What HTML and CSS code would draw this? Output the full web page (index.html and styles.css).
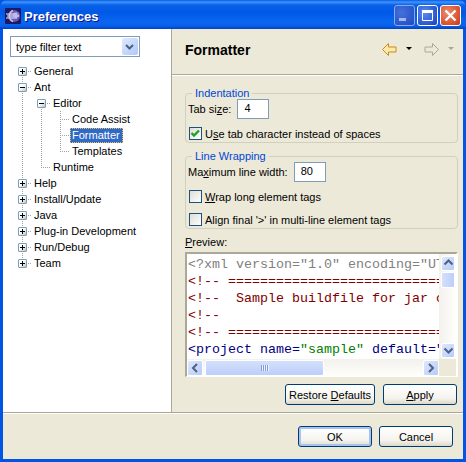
FILE: index.html
```html
<!DOCTYPE html>
<html>
<head>
  <title>Preferences</title>
  <link rel="stylesheet" href="styles.css">
</head>
<body>
  <div class="window">
    <div class="titlebar">
      <svg class="app-icon" width="16" height="16" viewBox="0 0 16 16">
        <rect width="16" height="16" rx="1" fill="#1b1a66"/>
        <circle cx="9" cy="8" r="6" fill="#6a58b4"/>
        <circle cx="11" cy="7" r="3" fill="#9488cc"/>
        <path d="M1 6h11M2 8h12M1 10h11" stroke="#f0eefa" stroke-width="1"/>
        <path d="M8 2.500a6 6 0 0 0 0 11" fill="none" stroke="#c9c3ea" stroke-width="1.500"/>
      </svg>
      <span class="title">Preferences</span>
      <div class="caption-buttons">
        <div class="caption-btn min">
          <svg width="21" height="21" viewBox="0 0 21 21"><rect x="5" y="13" width="7" height="3" fill="#fff" opacity="0.55"/></svg>
        </div>
        <div class="caption-btn">
          <svg width="21" height="21" viewBox="0 0 21 21"><path d="M5.500 6.500h10v9h-10z" fill="none" stroke="#fff" stroke-width="1"/><rect x="5" y="5" width="11" height="3" fill="#fff"/></svg>
        </div>
        <div class="caption-btn close">
          <svg width="21" height="21" viewBox="0 0 21 21"><path d="M5.500 5.500l10 10M15.500 5.500l-10 10" stroke="#fff" stroke-width="2.400"/></svg>
        </div>
      </div>
    </div>

    <div class="content">
      <div class="main">
        <div class="sidebar">
          <div class="filter">
            <span class="filter-text">type filter text</span>
            <span class="filter-drop">
              <svg width="15" height="17" viewBox="0 0 15 17"><path d="M4 7l3.500 3.500L11 7" fill="none" stroke="#4d6185" stroke-width="2"/></svg>
            </span>
          </div>

          <div class="tree">
            <div class="row"><span class="cell line-down"><i class="exp plus"></i></span><span class="label">General</span></div>
            <div class="row"><span class="cell line-both"><i class="exp minus"></i></span><span class="label">Ant</span></div>
            <div class="row"><span class="cell line-full"></span><span class="cell line-down"><i class="exp minus"></i></span><span class="label">Editor</span></div>
            <div class="row"><span class="cell line-full"></span><span class="cell line-full"></span><span class="cell elbow-tee"></span><span class="label">Code Assist</span></div>
            <div class="row"><span class="cell line-full"></span><span class="cell line-full"></span><span class="cell elbow-tee"></span><span class="label selected">Formatter</span></div>
            <div class="row"><span class="cell line-full"></span><span class="cell line-full"></span><span class="cell elbow-end"></span><span class="label">Templates</span></div>
            <div class="row"><span class="cell line-full"></span><span class="cell elbow-end"></span><span class="label">Runtime</span></div>
            <div class="row"><span class="cell line-both"><i class="exp plus"></i></span><span class="label">Help</span></div>
            <div class="row"><span class="cell line-both"><i class="exp plus"></i></span><span class="label">Install/Update</span></div>
            <div class="row"><span class="cell line-both"><i class="exp plus"></i></span><span class="label">Java</span></div>
            <div class="row"><span class="cell line-both"><i class="exp plus"></i></span><span class="label">Plug-in Development</span></div>
            <div class="row"><span class="cell line-both"><i class="exp plus"></i></span><span class="label">Run/Debug</span></div>
            <div class="row"><span class="cell line-up"><i class="exp plus"></i></span><span class="label">Team</span></div>
          </div>
        </div>

        <div class="panel">
          <div class="panel-header">
            <h1 class="panel-title">Formatter</h1>
            <div class="nav">
              <svg width="15" height="13" viewBox="0 0 15 13"><path d="M.5 6.500L6.500 .5v3.500h7.500v5H6.500v3.500z" fill="#fde9a9" stroke="#c98b1c"/></svg>
              <span class="nav-drop"></span>
              <svg width="15" height="13" viewBox="0 0 15 13"><path d="M14.500 6.500L8.500 .5v3.500H1v5h7.500v3.500z" fill="#ece9d8" stroke="#aca899"/></svg>
              <span class="nav-drop off"></span>
            </div>
          </div>

          <div class="panel-body">
            <fieldset class="group">
              <legend>Indentation</legend>
              <div class="field">
                <label>Tab si<u>z</u>e:</label>
                <span class="input size-tab">4</span>
              </div>
              <div class="check-row">
                <span class="check">
                  <svg width="11" height="11" viewBox="0 0 11 11"><path d="M1.500 5l2.500 2.500L9 2.500" fill="none" stroke="#21a121" stroke-width="2.400"/></svg>
                </span>
                <span>U<u>s</u>e tab character instead of spaces</span>
              </div>
            </fieldset>

            <fieldset class="group wrap">
              <legend>Line Wrapping</legend>
              <div class="field">
                <label>Ma<u>x</u>imum line width:</label>
                <span class="input">80</span>
              </div>
              <div class="check-row">
                <span class="check"></span>
                <span><u>W</u>rap long element tags</span>
              </div>
              <div class="check-row tight">
                <span class="check"></span>
                <span>Align final '&gt;' in multi-line element tags</span>
              </div>
            </fieldset>

            <div class="preview-label"><u>P</u>review:</div>

            <div class="preview">
              <div class="preview-top">
                <div class="code">
                  <div class="gray">&lt;?xml version="1.0" encoding="UT</div>
                  <div class="red">&lt;!-- ===========================</div>
                  <div class="red">&lt;!--&nbsp;&nbsp;Sample buildfile for jar c</div>
                  <div class="red">&lt;!--</div>
                  <div class="red">&lt;!-- ===========================</div>
                  <div class="blue">&lt;project name=<span class="green">"sample"</span> default="</div>
                </div>
                <div class="vscroll">
                  <span class="sb-btn">
                    <svg width="15" height="14" viewBox="0 0 15 14"><path d="M3.500 8.500l4-4 4 4" fill="none" stroke="#4d6185" stroke-width="2"/></svg>
                  </span>
                  <span class="sb-thumb vthumb"></span>
                  <span class="sb-space"></span>
                  <span class="sb-btn">
                    <svg width="15" height="14" viewBox="0 0 15 14"><path d="M3.500 5.500l4 4 4-4" fill="none" stroke="#4d6185" stroke-width="2"/></svg>
                  </span>
                </div>
              </div>
              <div class="preview-bottom">
                <div class="hscroll">
                  <span class="sb-btn hbtn">
                    <svg width="16" height="16" viewBox="0 0 16 16"><path d="M10 4l-4 4 4 4" fill="none" stroke="#4d6185" stroke-width="2"/></svg>
                  </span>
                  <span class="sb-thumb hthumb"><i class="grip"></i></span>
                  <span class="sb-space"></span>
                  <span class="sb-btn hbtn">
                    <svg width="16" height="16" viewBox="0 0 16 16"><path d="M6 4l4 4-4 4" fill="none" stroke="#4d6185" stroke-width="2"/></svg>
                  </span>
                </div>
                <div class="corner"></div>
              </div>
            </div>

            <div class="panel-buttons">
              <button class="btn restore">Restore <u>D</u>efaults</button>
              <button class="btn"><u>A</u>pply</button>
            </div>
          </div>
        </div>
      </div>

      <div class="footer">
        <button class="btn default">OK</button>
        <button class="btn">Cancel</button>
      </div>
    </div>
  </div>
</body>
</html>
```

FILE: styles.css
```css
* {
  box-sizing: border-box;
}

body {
  margin: 0;
  font-family: "Liberation Sans", sans-serif;
  font-size: 11px;
  color: #000;
  background-color: #0055e5;
}

u {
  text-underline-offset: 1px;
}

.window {
  width: 466px;
  height: 462px;
  display: flex;
  flex-direction: column;
  background-color: #0055e5;
  border-radius: 7px 7px 0 0;
  overflow: hidden;
}

/* title bar */
.titlebar {
  height: 29px;
  flex: none;
  display: flex;
  align-items: center;
  padding: 0 5px 0 5px;
  background: linear-gradient(#0a5ae0 0, #3d95ff 2px, #0a62e8 5px, #0058e6 12px, #0a66f0 22px, #0a5fe8 26px, #0040c8 29px);
}

.app-icon {
  margin-top: 3px;
}

.title {
  margin-left: 3px;
  margin-top: 3px;
  font-size: 13px;
  font-weight: bold;
  color: #fff;
  text-shadow: 1px 1px 0 #0f1089;
}

.caption-buttons {
  margin-left: auto;
  display: flex;
  gap: 2px;
  margin-top: 2px;
}

.caption-btn {
  width: 21px;
  height: 21px;
  border: 1px solid #fff;
  border-radius: 3px;
  background: radial-gradient(circle at 35% 35%, #5d8cf0, #2a56d0 70%, #1c3fb8);
  overflow: hidden;
}

.caption-btn.min {
  border-color: #8aa8ee;
  background: radial-gradient(circle at 35% 35%, #4472dc, #2a56c8 70%, #2048b8);
}

.caption-btn svg {
  display: block;
  margin: -1px;
}

.caption-btn.close {
  background: radial-gradient(circle at 35% 35%, #ec8a6e, #d9502c 70%, #b83a18);
}

/* client area */
.content {
  flex: 1;
  min-height: 0;
  margin: 0 3px 3px 3px;
  display: flex;
  flex-direction: column;
  background-color: #ece9d8;
}

.main {
  height: 384px;
  flex: none;
  display: flex;
  border-bottom: 1px solid #aca899;
}

.sidebar {
  width: 169px;
  flex: none;
  padding: 7px 0 0 7px;
  background-color: #fff;
  border-right: 1px solid #aca899;
}

.filter {
  width: 130px;
  height: 21px;
  display: flex;
  align-items: center;
  justify-content: space-between;
  padding: 1px;
  border: 1px solid #7f9db9;
  background-color: #fff;
}

.filter-text {
  padding-left: 4px;
}

.filter-drop {
  width: 16px;
  height: 17px;
  border-radius: 2px;
  background: linear-gradient(135deg, #e1eafe, #aec8f7);
}

.filter-drop svg {
  display: block;
}

/* tree */
.tree {
  margin: 6px 0 0 3px;
}

.row {
  height: 16px;
  display: flex;
  align-items: center;
}

.cell {
  width: 19px;
  height: 16px;
  flex: none;
  display: flex;
  align-items: center;
  justify-content: center;
  background-repeat: no-repeat;
}

.line-full {
  background-image: repeating-linear-gradient(#a0a0a0 0 1px, transparent 1px 2px);
  background-size: 1px 16px;
  background-position: 9px 0;
}

.line-down {
  background-image: repeating-linear-gradient(#a0a0a0 0 1px, transparent 1px 2px), repeating-linear-gradient(90deg, #a0a0a0 0 1px, transparent 1px 2px);
  background-size: 1px 8px, 10px 1px;
  background-position: 9px 8px, 9px 8px;
}

.line-up {
  background-image: repeating-linear-gradient(#a0a0a0 0 1px, transparent 1px 2px), repeating-linear-gradient(90deg, #a0a0a0 0 1px, transparent 1px 2px);
  background-size: 1px 8px, 10px 1px;
  background-position: 9px 0, 9px 8px;
}

.line-both,
.elbow-tee {
  background-image: repeating-linear-gradient(#a0a0a0 0 1px, transparent 1px 2px), repeating-linear-gradient(90deg, #a0a0a0 0 1px, transparent 1px 2px);
  background-size: 1px 16px, 10px 1px;
  background-position: 9px 0, 9px 8px;
}

.elbow-end {
  background-image: repeating-linear-gradient(#a0a0a0 0 1px, transparent 1px 2px), repeating-linear-gradient(90deg, #a0a0a0 0 1px, transparent 1px 2px);
  background-size: 1px 9px, 10px 1px;
  background-position: 9px 0, 9px 8px;
}

.exp {
  width: 9px;
  height: 9px;
  display: block;
  border: 1px solid #7b9ebd;
  border-radius: 1px;
  background-color: #fff;
  background-image: linear-gradient(#000, #000), linear-gradient(135deg, #fff 40%, #c6c2b2);
  background-size: 5px 1px, 100% 100%;
  background-position: center, center;
  background-repeat: no-repeat;
}

.exp.plus {
  background-image: linear-gradient(#000, #000), linear-gradient(#000, #000), linear-gradient(135deg, #fff 40%, #c6c2b2);
  background-size: 5px 1px, 1px 5px, 100% 100%;
  background-position: center, center, center;
}

.label {
  margin-left: 2px;
  line-height: 15px;
  white-space: nowrap;
}

.label.selected {
  margin-left: 0;
  padding: 0 3px 0 2px;
  color: #fff;
  background-color: #316ac5;
  outline: 1px dotted #e8c060;
  outline-offset: -1px;
}

/* right side */
.panel {
  flex: 1;
  min-width: 0;
  display: flex;
  flex-direction: column;
}

.panel-header {
  height: 46px;
  flex: none;
  display: flex;
  align-items: center;
  justify-content: space-between;
  padding: 0 9px 4px 13px;
  border-bottom: 1px solid #aca899;
  box-shadow: 0 1px 0 #fff;
}

.panel-title {
  margin: 0;
  font-size: 14px;
  font-weight: bold;
}

.nav {
  display: flex;
  align-items: center;
}

.nav-drop {
  width: 0;
  height: 0;
  margin: -2px 12px 0 9px;
  border: 3px solid transparent;
  border-top: 3px solid #000;
  border-bottom: none;
}

.nav-drop.off {
  margin-right: 0;
  border-top-color: #aca899;
}

.panel-body {
  flex: 1;
  min-width: 0;
  padding: 12px 5px 0 13px;
}

.group {
  height: 56px;
  margin: 0;
  padding: 0 0 0 2px;
  border: 1px solid #d0d0bf;
  border-radius: 4px;
  min-width: 0;
}

.group.wrap {
  height: 79px;
  margin-top: 7px;
}

.group legend {
  margin-left: 4px;
  padding: 0 3px 0 3px;
  color: #0046d5;
  line-height: 13px;
}

.field {
  height: 20px;
  display: flex;
  align-items: center;
  gap: 6px;
  margin-top: -1px;
}

.input {
  width: 32px;
  height: 20px;
  display: block;
  padding: 2px 0 0 6px;
  border: 1px solid #7f9db9;
  background-color: #fff;
}

.check-row {
  display: flex;
  align-items: center;
  gap: 3px;
  height: 13px;
  margin: 8px 0 0 1px;
}

.check-row.tight {
  margin-top: 10px;
}

.check {
  width: 13px;
  height: 13px;
  flex: none;
  border: 1px solid #1c5180;
  background: linear-gradient(135deg, #dcdcd7, #fff);
}

.check svg {
  display: block;
}

.preview-label {
  margin-top: 7px;
  height: 16px;
  line-height: 13px;
}

.preview {
  height: 125px;
  display: flex;
  flex-direction: column;
  border: 2px solid;
  border-width: 2px 2px 1px 2px;
  border-color: #aca899 #fff #fff #aca899;
  background-color: #fff;
}

.preview-top {
  flex: 1;
  min-height: 0;
  display: flex;
}

.code {
  flex: 1;
  min-width: 0;
  overflow: hidden;
  padding: 2px 0 0 1px;
  font-family: "Liberation Mono", monospace;
  font-size: 13.33px;
  line-height: 17px;
  white-space: nowrap;
}

.gray { color: #808080; }
.red { color: #800000; }
.blue { color: #000080; }
.green { color: #008000; }

.vscroll {
  width: 17px;
  flex: none;
  display: flex;
  flex-direction: column;
  gap: 1px;
  padding: 2px 1px 1px 2px;
  background: linear-gradient(90deg, #f3f1ec, #fefefb);
}

.hscroll {
  flex: 1;
  min-width: 0;
  display: flex;
  gap: 1px;
  padding-top: 1px;
  background: linear-gradient(#f3f1ec, #fefefb);
}

.sb-btn,
.sb-thumb {
  display: block;
  flex: none;
  border: 1px solid #fff;
  border-radius: 2px;
  background: linear-gradient(135deg, #dfe8fd, #b5cbf8);
}

.sb-btn svg {
  display: block;
  margin: -1px;
}

.sb-btn {
  height: 15px;
}

.hbtn {
  width: 16px;
  height: 16px;
}

.vthumb {
  height: 16px;
  background: linear-gradient(90deg, #d4dffb, #bccffa);
}

.sb-space {
  flex: 1;
}

.hthumb {
  width: 119px;
  margin-left: 1px;
  height: 16px;
  display: flex;
  align-items: center;
  justify-content: center;
  background: linear-gradient(#d4dffb, #bccffa);
}

.grip {
  width: 8px;
  height: 6px;
  background-image: repeating-linear-gradient(90deg, #7f9ce0 0 1px, #eef3fe 1px 2px);
}

.preview-bottom {
  height: 17px;
  flex: none;
  display: flex;
}

.corner {
  width: 17px;
  flex: none;
  background-color: #ece9d8;
}

.panel-buttons {
  display: flex;
  justify-content: flex-end;
  gap: 8px;
  margin: 7px 1px 0 0;
}

.btn {
  width: 74px;
  height: 21px;
  padding: 0;
  font-family: inherit;
  font-size: inherit;
  color: #000;
  border: 1px solid #003c74;
  border-radius: 3px;
  background: linear-gradient(#fff, #f4f3ee 70%, #dcd8c8);
}

.btn.restore {
  width: 90px;
}

.btn.default {
  box-shadow: inset 0 0 0 2px #a8c4ee;
}

.footer {
  flex: 1;
  display: flex;
  justify-content: flex-end;
  gap: 7px;
  padding: 12px 10px 0 0;
  border-top: 1px solid #fff;
}
```
